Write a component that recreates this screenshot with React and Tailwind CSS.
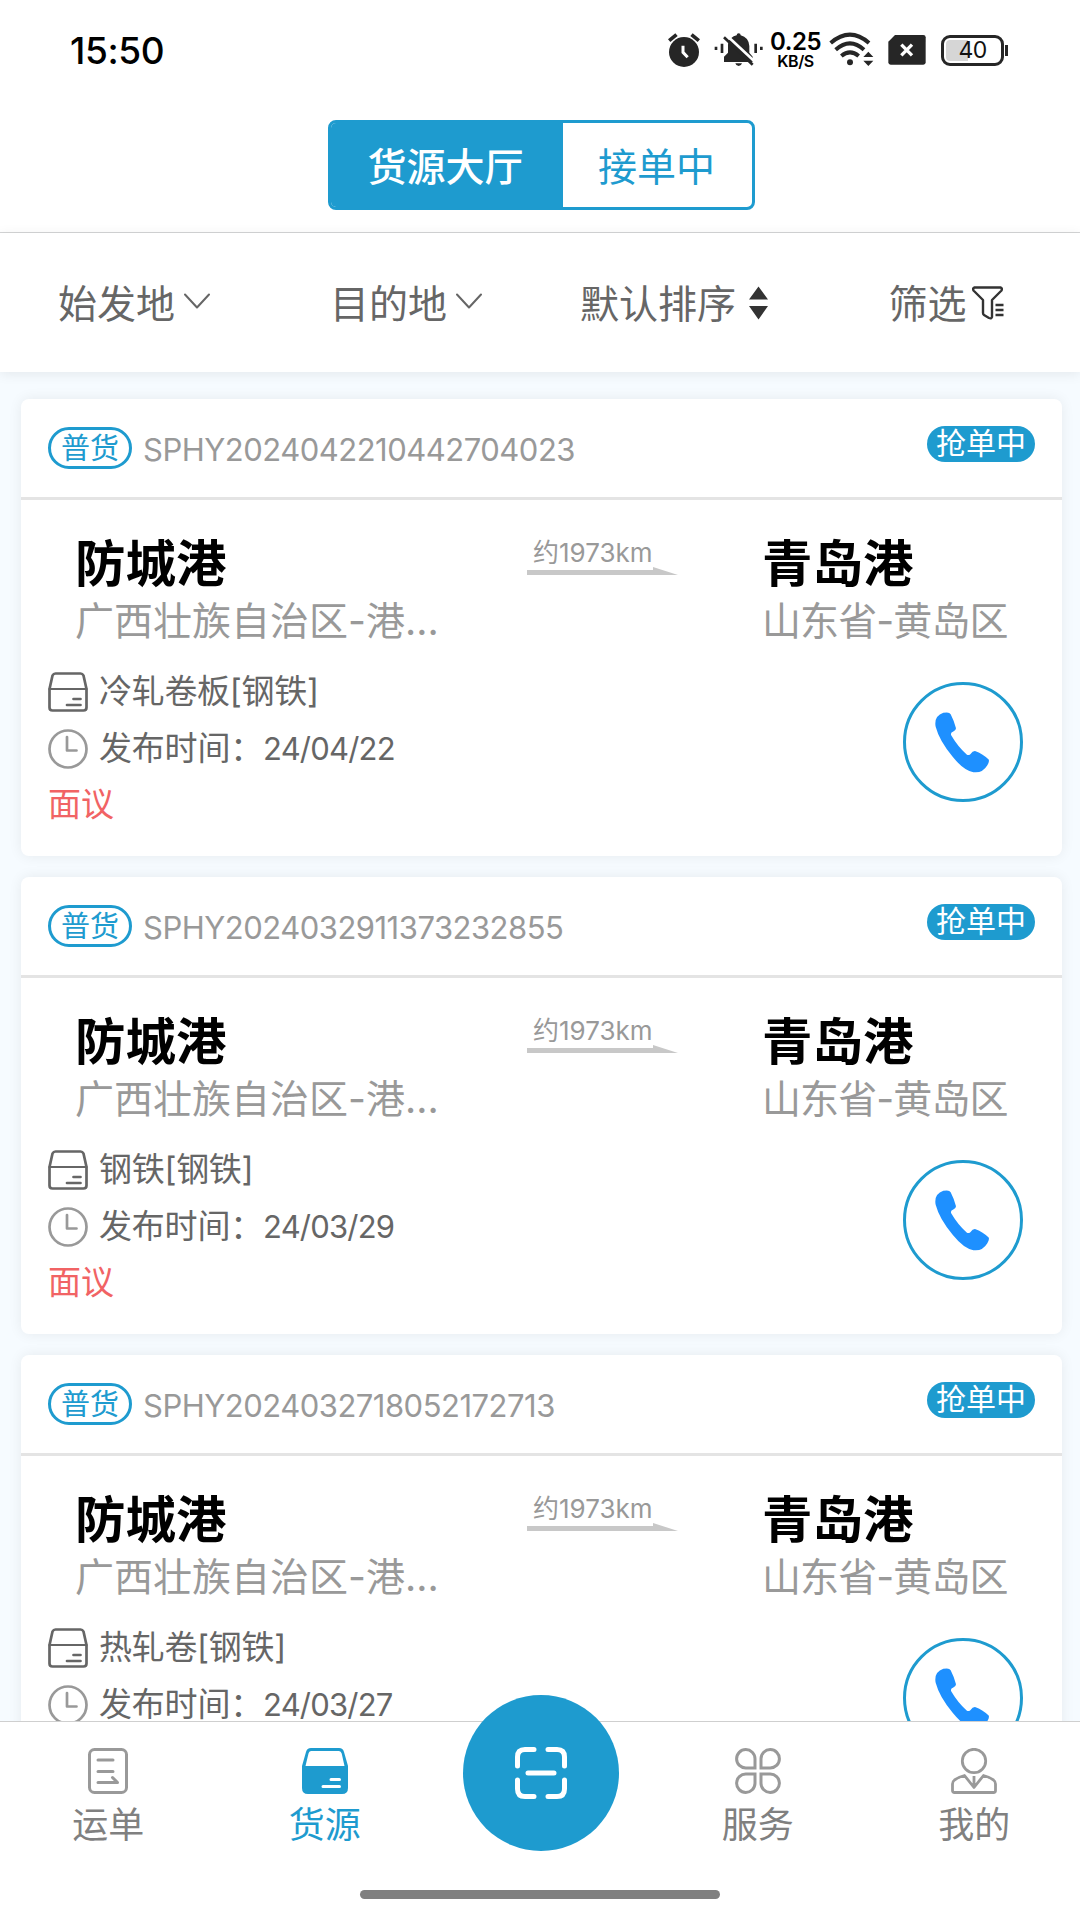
import React, { useState } from 'react';

const orders = [
  { id: 'SPHY2024042210442704023', goods: '冷轧卷板[钢铁]', date: '24/04/22' },
  { id: 'SPHY2024032911373232855', goods: '钢铁[钢铁]', date: '24/03/29' },
  { id: 'SPHY2024032718052172713', goods: '热轧卷[钢铁]', date: '24/03/27' },
];

const AlarmIcon = () => (
  <svg className="w-8 h-9" viewBox="84 66 96 108" fill="#262626">
    <circle cx="132" cy="126" r="45" />
    <path d="M84 88l22-18 7 8-22 18zM180 88l-22-18-7 8 22 18z" />
    <path d="M129 107v20l14 15" fill="none" stroke="#fff" strokeWidth="9" />
  </svg>
);

const MuteIcon = () => (
  <svg className="w-[49px] h-9" viewBox="220 66 147 108" fill="#262626">
    <path d="M272 84q6-6 16-8 0-6 6-6t6 6q24 6 26 32v20l10 12v16h-86v-16l12-12v-24q0-8 4-14zM284 160h20q-2 8-10 8t-10-8z" />
    <path d="M256 74l90 84" stroke="#fff" strokeWidth="8" />
    <path d="M250 82l86 82" stroke="#262626" strokeWidth="8" />
    <path d="M222 110h8v10h-8zM240 101h8v28h-8zM341 101h8v28h-8zM358 110h8v10h-8z" />
  </svg>
);

const WifiIcon = () => (
  <svg className="w-[45px] h-9" viewBox="569 66 135 108" fill="none" stroke="#262626" strokeWidth="12">
    <path d="M574 99q58-50 115 0" />
    <path d="M589 119q43-38 85 0" />
    <path d="M606 138q26-22 52 0" />
    <circle cx="632" cy="157" r="9" fill="#262626" stroke="none" />
    <path d="M672 141l15-16 15 16zM672 152l15 16 15-16z" fill="#262626" stroke="none" />
  </svg>
);

const SimIcon = () => (
  <svg className="w-[38px] h-9" viewBox="744 66 114 108" fill="#262626">
    <path d="M765 75h85q7 0 7 7v75q0 7-7 7h-98q-7 0-7-7V95z" />
    <path d="M784 104l32 32M816 104l-32 32" stroke="#fff" strokeWidth="10" />
  </svg>
);

const ChevronIcon = () => (
  <svg className="w-[26px] h-4 mb-1.5" viewBox="0 0 26 16" fill="none" stroke="#666" strokeWidth="2" strokeLinecap="round" strokeLinejoin="round">
    <path d="M1 1.500l12 13 12-13" />
  </svg>
);

const SortIcon = () => (
  <svg className="w-[19px] h-[34px] mb-0.5" viewBox="0 0 19 34" fill="#333">
    <path d="M9.500 0.500L19 13.500H0zM0 20h19L9.500 33.500z" />
  </svg>
);

const FunnelIcon = () => (
  <svg className="w-8 h-[34px] mb-0.5" viewBox="0 0 32 34" fill="none" stroke="#333" strokeWidth="2.400" strokeLinecap="round" strokeLinejoin="round">
    <path d="M2.500 1.500h26q2 .5 1 3L20 14v17q-.5 2-3 1l-5-3q-1-.6-1-2V14L1.500 4.500q-1-2.500 1-3z" />
    <path d="M23.500 19h8M23.500 24h8M23.500 29h8" strokeLinecap="butt" />
  </svg>
);

const GoodsIcon = () => (
  <svg className="w-10 h-10" viewBox="0 0 40 40" fill="none" stroke="#666" strokeWidth="2.700" strokeLinecap="round" strokeLinejoin="round">
    <path d="M7.500 1.500h25q2 0 3 2L38.500 17v18.500q0 3-3 3h-31q-3 0-3-3V17L4.500 3.500q1-2 3-2z" />
    <path d="M1.500 17h37" strokeWidth="2.200" />
    <path d="M25.500 27h7M19 33h13.500" />
  </svg>
);

const ClockIcon = () => (
  <svg className="w-10 h-10" viewBox="0 0 40 40" fill="none" stroke="#999" strokeWidth="2.700" strokeLinecap="round" strokeLinejoin="round">
    <circle cx="20" cy="20" r="18.500" />
    <path d="M19 8v13.500h9.500" />
  </svg>
);

const PhoneIcon = () => (
  <svg className="w-[54px] h-[61px]" viewBox="225 185 162 182" fill="#1e90ff">
    <path d="M250 187q18-4 22 4 9 17 16 42 0 6-8 10-10 4-6 12 20 34 46 57 5 4 11-1 8-11 16-9 22 8 39 25 3 6-4 17-15 25-42 21-28-4-62-46-40-48-51-90-6-32 23-42z" />
  </svg>
);

const WaybillIcon = () => (
  <svg className="w-10 h-[46px]" viewBox="0 0 40 46" fill="none" stroke="#999" strokeWidth="3" strokeLinecap="round" strokeLinejoin="round">
    <rect x="1.500" y="1.500" width="37" height="43" rx="5" />
    <path d="M10 12h15M10 23.500h15M10 34.500h19.500l-5-5" />
  </svg>
);

const SourceIcon = () => (
  <svg className="w-[46px] h-[46px]" viewBox="0 0 46 46" fill="#1e9bcf">
    <path d="M9 0h28q4 0 5 4l4 14v22q0 6-6 6H6q-6 0-6-6V18L4 4q1-4 5-4z" />
    <path d="M9 3h28q2 0 2.700 2.500L42.500 18h-39L6.500 5.500Q7 3 9 3z" fill="#fff" />
    <path d="M29 31.500h8.500M21 38.500h16.500" stroke="#fff" strokeWidth="3" strokeLinecap="round" />
  </svg>
);

const ServiceIcon = () => (
  <svg className="w-[46px] h-[46px]" viewBox="0 0 46 46" fill="none" stroke="#999" strokeWidth="3">
    <path d="M20 20h-9A9.200 9.200 0 1 1 20 10.800z" />
    <path d="M26 20h9A9.200 9.200 0 1 0 26 10.800z" />
    <path d="M20 26h-9A9.200 9.200 0 1 0 20 35.200z" />
    <path d="M26 26h9A9.200 9.200 0 1 1 26 35.200z" />
  </svg>
);

const MineIcon = () => (
  <svg className="w-[46px] h-[46px]" viewBox="0 0 46 46" fill="none" stroke="#999" strokeWidth="2.800" strokeLinejoin="round">
    <circle cx="23" cy="13" r="11.700" />
    <path d="M13.500 27.500l9.500 12 9.500-12q5 1 10 4.500 2 1.500 2 4v6.500q0 2-2 2h-39q-2 0-2-2V36q0-2.500 2-4 5-3.500 10-4.500zM23 28v10" />
  </svg>
);

const ScanIcon = () => (
  <svg className="w-[54px] h-[54px]" viewBox="0 0 54 54" fill="none" stroke="#fff" strokeWidth="5" strokeLinecap="round">
    <path d="M20 3.500h-9q-7.500 0-7.500 7.500v9M34 3.500h9q7.500 0 7.500 7.500v9M20 50.500h-9q-7.500 0-7.500-7.500v-9M34 50.500h9q7.500 0 7.500-7.500v-9M14 27h26" />
  </svg>
);

const StatusBar = () => (
  <div className="h-[100px] flex items-center justify-between pl-[70px] pr-[72px]">
    <span className="text-[37px] leading-none font-medium tracking-[-0.4px] text-black">15:50</span>
    <div className="flex items-center text-[#111]">
      <AlarmIcon />
      <div className="ml-3.5"><MuteIcon /></div>
      <div className="ml-[7px] w-[51px] flex flex-col items-center font-semibold text-black">
        <span className="text-[24px] leading-[22px] tracking-[-0.4px]">0.25</span>
        <span className="text-[16px] leading-[17px] tracking-tight">KB/S</span>
      </div>
      <div className="ml-2"><WifiIcon /></div>
      <div className="ml-3.5"><SimIcon /></div>
      <div className="ml-[15px] flex items-center">
        <div className="w-[63px] h-[31px] border-[3px] border-[#262626] rounded-[9px] p-0.5 relative">
          <div className="w-[22px] h-full bg-[#d6d6d6] rounded-l-[4px]"></div>
          <span className="absolute inset-0 flex items-center justify-center text-[23px] leading-none tracking-tight">40</span>
        </div>
        <div className="w-[3px] h-[11px] ml-px bg-[#262626]"></div>
      </div>
    </div>
  </div>
);

const OrderCard = ({ order }) => (
  <div className="h-[457px] shrink-0 bg-white rounded-lg shadow-[0_0_14px_rgba(0,0,0,0.07)] whitespace-nowrap">
    <div className="h-[101px] border-b-[3px] border-[#e4e4e4] flex justify-between pl-[27px] pr-[27px]">
      <div className="flex items-center">
        <span className="w-[84px] h-[42px] border-[3px] border-[#1e9bcf] rounded-full text-[#1e9bcf] text-[29px] leading-none flex items-center justify-center">
          普货
        </span>
        <span className="ml-[11px] mt-0.5 text-[31px] leading-none tracking-[-0.5px] text-[#999]">{order.id}</span>
      </div>
      <span className="mt-[27px] w-[108px] h-9 pb-0.5 rounded-full bg-[#1e9bcf] text-white text-[30px] leading-none flex items-center justify-center">
        抢单中
      </span>
    </div>

    <div className="flex pt-9 pl-[54px]">
      <div className="w-[452px] shrink-0">
        <div className="text-[50.5px] leading-[56px] h-[57px] font-bold text-black">防城港</div>
        <div className="text-[39px] leading-[56px] h-[57px] text-[#999]">广西壮族自治区-港...</div>
      </div>
      <div className="w-[235px] shrink-0">
        <div className="ml-1.5 text-[26px] leading-[34px] h-[31px] text-[#999]">约1973km</div>
        <svg className="w-[151px] h-2" viewBox="0 0 151 8" fill="#c8c8c8">
          <path d="M0 3h126V0l25 8H0z" />
        </svg>
      </div>
      <div>
        <div className="text-[50.5px] leading-[56px] h-[57px] font-bold text-black">青岛港</div>
        <div className="text-[39px] leading-[56px] h-[57px] tracking-[-0.9px] text-[#999]">山东省-黄岛区</div>
      </div>
    </div>

    <div className="flex justify-between pl-[27px] pr-[39px] mt-[13px] text-[33px] leading-none text-[#666]">
      <div>
        <div className="flex items-center gap-[11px] h-[57px]">
          <GoodsIcon />
          <span className="tracking-[-0.3px]">{order.goods}</span>
        </div>
        <div className="flex items-center gap-[11px] h-[57px]">
          <ClockIcon />
          <span className="flex items-center tracking-[-0.2px]">
            发布时间：<span className="text-[31px] tracking-[-0.8px]">{order.date}</span>
          </span>
        </div>
        <div className="flex items-center h-[55px] text-[#f16364]">面议</div>
      </div>
      <button className="mt-[19px] w-[120px] h-[120px] border-[3px] border-[#1e9bcf] rounded-full flex items-center justify-center pr-0.5">
        <PhoneIcon />
      </button>
    </div>
  </div>
);

const NavItem = ({ icon, label, active }) => (
  <div className="w-[216.5px] flex flex-col items-center pt-[26px]">
    {icon}
    <span className={`mt-[7px] h-12 text-[36px] leading-[48px] ${active ? 'text-[#1e9bcf]' : 'text-[#808080]'}`}>{label}</span>
  </div>
);

const App = () => {
  const [tab, setTab] = useState('hall');

  return (
    <div className="w-[1080px] h-[1920px] overflow-hidden flex flex-col bg-[#f6fbff] font-['Inter','Noto_Sans_CJK_SC',sans-serif]">
      {/* Header */}
      <div className="h-[233px] shrink-0 bg-white border-b border-[#d4d5d6]">
        <StatusBar />
        <div className="mt-5 ml-[328px] w-[427px] h-[90px] flex border-[3px] border-[#1e9bcf] rounded-lg overflow-hidden text-[39px] leading-none">
          <button
            onClick={() => setTab('hall')}
            className={`w-[232px] pt-0.5 pr-[3px] ${tab === 'hall' ? 'bg-[#1e9bcf] text-white font-medium' : 'text-[#1e9bcf]'}`}
          >
            货源大厅
          </button>
          <button
            onClick={() => setTab('taking')}
            className={`flex-1 pt-0.5 pr-0.5 ${tab === 'taking' ? 'bg-[#1e9bcf] text-white font-medium' : 'text-[#1e9bcf]'}`}
          >
            接单中
          </button>
        </div>
      </div>

      {/* Filters */}
      <div className="h-[139px] shrink-0 bg-white pt-0.5 flex text-[39px] leading-none text-[#666] shadow-[0_2px_12px_rgba(0,0,0,0.08)]">
        <div className="flex-1 flex items-center justify-center gap-[9px] pr-1">始发地<ChevronIcon /></div>
        <div className="flex-1 flex items-center justify-center gap-[9px]">目的地<ChevronIcon /></div>
        <div className="flex-1 flex items-center justify-center gap-[13px]">默认排序<SortIcon /></div>
        <div className="flex-1 flex items-center justify-center gap-[5px] pl-1">筛选<FunnelIcon /></div>
      </div>

      {/* Order list */}
      <div className="flex-1 min-h-0 overflow-hidden flex flex-col gap-[21px] pt-[27px] pl-[21px] pr-[18px]">
        {orders.map((order) => (
          <OrderCard key={order.id} order={order} />
        ))}
      </div>

      {/* Bottom navigation */}
      <div className="h-[199px] shrink-0 bg-white border-t border-[#cfcfcf] flex flex-col justify-between">
        <div className="flex *:shrink-0">
          <NavItem icon={<WaybillIcon />} label="运单" />
          <NavItem icon={<SourceIcon />} label="货源" active />
          <div className="w-[216.5px] flex justify-center">
            <button className="-mt-[27px] w-[156px] h-[156px] rounded-full bg-[#1e9bcf] flex items-center justify-center">
              <ScanIcon />
            </button>
          </div>
          <NavItem icon={<ServiceIcon />} label="服务" />
          <NavItem icon={<MineIcon />} label="我的" />
        </div>
        <div className="mb-[21px] mx-auto w-[360px] h-[9px] rounded-full bg-[#808080]"></div>
      </div>
    </div>
  );
};

export default App;
